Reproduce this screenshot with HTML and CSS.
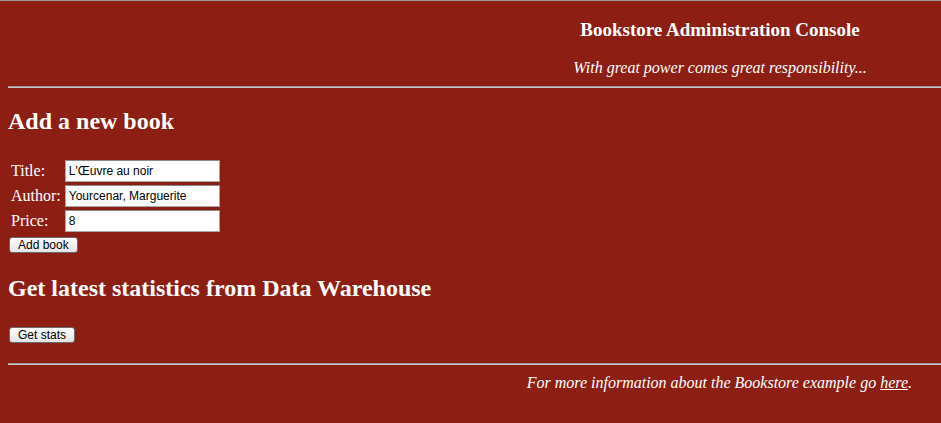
FILE: index.html
```html
<!DOCTYPE html>
<html>
<head lang="en">
    <meta charset="UTF-8">
    <title>Bookstore Administration Console</title>
    <link rel="stylesheet" href="styles.css">
</head>
<body>
<div class="page">
    <div class="header">
        <div class="title">Bookstore Administration Console</div>
        <div class="motto">With great power comes great responsibility...</div>
    </div>
    <hr class="rule">

    <h2>Add a new book</h2>
    <form class="book-form" onsubmit="return false;">
        <table class="fields">
            <tr>
                <td>Title:</td>
                <td><input class="field" type="text" value="L'Œuvre au noir"></td>
            </tr>
            <tr>
                <td>Author:</td>
                <td><input class="field" type="text" value="Yourcenar, Marguerite"></td>
            </tr>
            <tr>
                <td>Price:</td>
                <td><input class="field" type="text" value="8"></td>
            </tr>
        </table>
        <button class="btn" type="submit">Add book</button>
    </form>

    <h2 class="stats-title">Get latest statistics from Data Warehouse</h2>
    <div class="stats">
        <button class="btn" type="button">Get stats</button>
    </div>

    <hr class="rule">
    <div class="footer">
        For more information about the Bookstore example go <a href="#">here</a>.
    </div>
</div>
</body>
</html>
```

FILE: styles.css
```css
* {
    margin: 0;
    padding: 0;
}

html, body {
    height: 100%;
    background-color: #8c1e13;
}

body {
    border-top: 1px solid #9a9a9a;
    color: #fff;
    font-family: "Liberation Serif", "Times New Roman", serif;
    font-size: 16px;
}

.page {
    padding-left: 8px;
}

.header {
    padding: 17px 0 0 491px;
    text-align: center;
}

.title {
    font-size: 19px;
    font-weight: bold;
    line-height: 24px;
}

.motto {
    margin-top: 16px;
    font-style: italic;
    line-height: 20px;
}

.rule {
    border: 0;
    border-top: 1px solid #9c9c9c;
    border-bottom: 1px solid #c8c8c8;
    margin: 8px 0 0;
}

h2 {
    font-size: 24px;
    font-weight: bold;
    line-height: 28px;
    margin: 19px 0 0;
}

.book-form {
    margin-top: 22px;
}

.fields {
    border-spacing: 3px 3px;
    margin-left: 0;
}

.fields td {
    padding: 0;
    vertical-align: middle;
    line-height: 20px;
}

.fields td:first-child {
    padding-right: 1px;
}

.field {
    width: 155px;
    height: 22px;
    box-sizing: border-box;
    border: 1px solid #a8a8a8;
    border-top-color: #8a8a8a;
    padding: 0 3px;
    font-family: "Liberation Sans", Arial, sans-serif;
    font-size: 12px;
    color: #000;
    background: #fff;
}

.btn {
    display: block;
    margin: 2px 0 0 1px;
    height: 16px;
    padding: 0 8px;
    border: 1px solid #6a6a6a;
    border-radius: 3px;
    background: linear-gradient(#ffffff, #e4e4e4);
    font-family: "Liberation Sans", Arial, sans-serif;
    font-size: 12px;
    line-height: 14px;
    color: #000;
}

.stats-title {
    margin-top: 21px;
}

.stats {
    padding-top: 23px;
    padding-bottom: 12px;
}

.footer {
    padding: 9px 29px 0 0;
    text-align: right;
    font-style: italic;
}

.footer a {
    color: #fff;
}
```
